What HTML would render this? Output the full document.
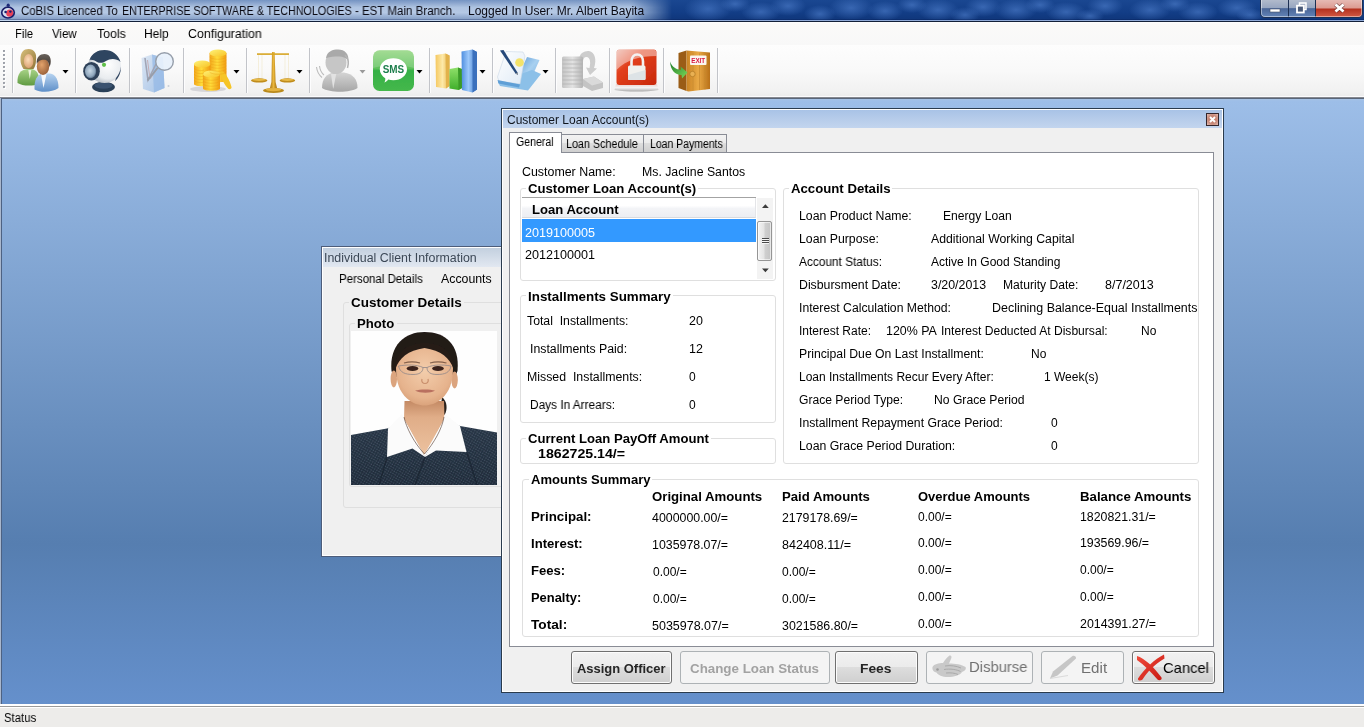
<!DOCTYPE html>
<html lang="en">
<head>
<meta charset="utf-8">
<title>CoBIS - Customer Loan Account(s)</title>
<style>
html,body{margin:0;padding:0;}
body{width:1364px;height:727px;overflow:hidden;position:relative;background:#f0f0f0;font-family:'Liberation Sans',sans-serif;font-size:12px;color:#000;}
div,span.t,svg{position:absolute;box-sizing:border-box;}
span.t{white-space:pre;line-height:16px;height:16px;transform-origin:0 0;will-change:transform;}
.gb{border:1px solid #dfdfdf;border-radius:3px;}
.gbl{background:#fff;}

</style>
</head>
<body>
<header class="titlebar">
<div style="left:0px;top:0px;width:1364px;height:21px;background:linear-gradient(to bottom,#1a4791 0,#123d86 60%,#0f3579 100%);"></div>
<div style="left:0px;top:0px;width:1364px;height:21px;background:radial-gradient(ellipse 24px 13px at 708px 9px,rgba(80,128,205,.6) 0,rgba(80,128,205,0) 100%),radial-gradient(ellipse 15px 8px at 735px 4px,rgba(80,128,205,.6) 0,rgba(80,128,205,0) 100%),radial-gradient(ellipse 20px 10px at 761px 12px,rgba(80,128,205,.6) 0,rgba(80,128,205,0) 100%),radial-gradient(ellipse 18px 10px at 788px 6px,rgba(80,128,205,.6) 0,rgba(80,128,205,0) 100%),radial-gradient(ellipse 16px 9px at 820px 14px,rgba(80,128,205,.6) 0,rgba(80,128,205,0) 100%),radial-gradient(ellipse 22px 12px at 851px 8px,rgba(80,128,205,.6) 0,rgba(80,128,205,0) 100%),radial-gradient(ellipse 18px 10px at 885px 11px,rgba(80,128,205,.6) 0,rgba(80,128,205,0) 100%),radial-gradient(ellipse 15px 8px at 912px 5px,rgba(80,128,205,.6) 0,rgba(80,128,205,0) 100%),radial-gradient(ellipse 21px 11px at 938px 10px,rgba(80,128,205,.6) 0,rgba(80,128,205,0) 100%),radial-gradient(ellipse 15px 8px at 965px 15px,rgba(80,128,205,.6) 0,rgba(80,128,205,0) 100%),radial-gradient(ellipse 18px 10px at 983px 7px,rgba(80,128,205,.6) 0,rgba(80,128,205,0) 100%),radial-gradient(ellipse 21px 11px at 1016px 10px,rgba(80,128,205,.6) 0,rgba(80,128,205,0) 100%),radial-gradient(ellipse 15px 8px at 1040px 5px,rgba(80,128,205,.6) 0,rgba(80,128,205,0) 100%),radial-gradient(ellipse 20px 10px at 1066px 12px,rgba(80,128,205,.6) 0,rgba(80,128,205,0) 100%),radial-gradient(ellipse 14px 7px at 1090px 16px,rgba(80,128,205,.6) 0,rgba(80,128,205,0) 100%),radial-gradient(ellipse 18px 10px at 1105px 6px,rgba(80,128,205,.6) 0,rgba(80,128,205,0) 100%),radial-gradient(ellipse 21px 11px at 1150px 10px,rgba(80,128,205,.6) 0,rgba(80,128,205,0) 100%),radial-gradient(ellipse 15px 8px at 1175px 4px,rgba(80,128,205,.6) 0,rgba(80,128,205,0) 100%),radial-gradient(ellipse 20px 10px at 1198px 12px,rgba(80,128,205,.6) 0,rgba(80,128,205,0) 100%),radial-gradient(ellipse 20px 10px at 1237px 8px,rgba(80,128,205,.6) 0,rgba(80,128,205,0) 100%),radial-gradient(ellipse 14px 7px at 1250px 15px,rgba(80,128,205,.6) 0,rgba(80,128,205,0) 100%);"></div>
<div style="left:0px;top:0px;width:680px;height:21px;background:linear-gradient(to bottom,rgba(208,224,244,.5) 0,rgba(208,224,244,.82) 35%,rgba(208,224,244,.86) 60%,rgba(208,224,244,.55) 100%);-webkit-mask-image:linear-gradient(to right,#000 0,#000 630px,rgba(0,0,0,.5) 652px,transparent 672px);mask-image:linear-gradient(to right,#000 0,#000 630px,rgba(0,0,0,.5) 652px,transparent 672px);"></div>
<div style="left:0px;top:19px;width:1364px;height:1px;background:rgba(0,20,70,.25);"></div>
<div style="left:0px;top:20px;width:1364px;height:1px;background:linear-gradient(to right,#c4d6ee 0,#c4d6ee 620px,#90aad8 680px,#90aad8 100%);"></div>
<div style="left:0px;top:21px;width:1364px;height:1px;background:#14213a;"></div>
<span class="t" style="left:20.7px;top:2.8px;font-size:12px;transform:scaleX(0.9485);color:#0a0a14;">CoBIS Licenced To</span>
<span class="t" style="left:121.6px;top:2.8px;font-size:12px;transform:scaleX(0.8929);color:#0a0a14;">ENTERPRISE SOFTWARE &amp; TECHNOLOGIES</span>
<span class="t" style="left:354.5px;top:2.8px;font-size:12px;transform:scaleX(0.9600);color:#0a0a14;">- EST Main Branch.</span>
<span class="t" style="left:467.8px;top:2.8px;font-size:12px;color:#0a0a14;">Logged In User: Mr. Albert Bayita</span>
<svg style="left:0;top:3px" width="17" height="17" viewBox="0 0 17 17"><circle cx="8.2" cy="2.2" r="1.6" fill="#1c2a78"/><ellipse cx="8" cy="9.6" rx="6.6" ry="5.6" fill="#d7dff0"/><ellipse cx="9.8" cy="10.2" rx="3.6" ry="3.6" fill="#e8435a"/><ellipse cx="8" cy="9.6" rx="6.3" ry="5.4" fill="none" stroke="#1a1f6a" stroke-width="1.7"/><circle cx="5.6" cy="9" r="1.3" fill="#1a1f6a"/><circle cx="10.4" cy="8.6" r="1.2" fill="#1a1f6a"/></svg>
<svg style="left:1258px;top:0" width="106" height="20" viewBox="1258 0 106 20"><defs><linearGradient id="wbB" x1="0" y1="0" x2="0" y2="1"><stop offset="0" stop-color="#b4bdcd"/><stop offset=".48" stop-color="#97a6c0"/><stop offset=".52" stop-color="#4a6698"/><stop offset="1" stop-color="#6485b8"/></linearGradient><linearGradient id="wbR" x1="0" y1="0" x2="0" y2="1"><stop offset="0" stop-color="#e6bab4"/><stop offset=".48" stop-color="#dc9a90"/><stop offset=".52" stop-color="#b4301e"/><stop offset="1" stop-color="#d25a44"/></linearGradient></defs><path d="M1260.5 -1 H1362.5 V13 C1362.5 16 1361 17.5 1358 17.5 H1265 C1262 17.5 1260.5 16 1260.5 13Z" fill="url(#wbB)" stroke="#1c2f52" stroke-width="1"/><path d="M1315.5 0 H1362 V13 C1362 15.5 1360.5 17 1358 17 H1315.5Z" fill="url(#wbR)"/><path d="M1288.5 0 V17.5 M1315.5 0 V17.5" stroke="#1c2f52" stroke-width="1"/><path d="M1261.5 0 V13 C1261.5 15.5 1263 16.5 1265 16.5 H1358 C1360 16.5 1361.500 15.5 1361.5 13 V0" fill="none" stroke="#fff" stroke-opacity=".45" stroke-width="1"/><rect x="1270" y="9" width="10" height="3" fill="#fff" stroke="#44506a" stroke-width=".6"/><rect x="1299.500" y="3" width="6.500" height="6.5" fill="none" stroke="#fff" stroke-width="1.5"/><rect x="1297" y="5.700" width="6.800" height="6.800" fill="#4a5a78" stroke="#fff" stroke-width="1.8"/><path d="M1335.500 4.500 L1343.500 11.500 M1343.500 4.500 L1335.500 11.500" stroke="#5a3030" stroke-opacity=".7" stroke-width="4.2"/><path d="M1335.500 4.500 L1343.500 11.500 M1343.500 4.500 L1335.500 11.500" stroke="#fff" stroke-width="2.800"/></svg>
</header>
<nav class="menubar">
<div style="left:0px;top:22px;width:1364px;height:23px;background:linear-gradient(to bottom,#ffffff 0,#fbfaf9 8%,#f8f8f8 100%);"></div>
<span class="t" style="left:15.2px;top:25.7px;font-size:12.5px;transform:scaleX(0.8930);">File</span>
<span class="t" style="left:51.5px;top:25.7px;font-size:12.5px;transform:scaleX(0.9191);">View</span>
<span class="t" style="left:96.5px;top:25.7px;font-size:12.5px;transform:scaleX(0.9833);">Tools</span>
<span class="t" style="left:144.0px;top:25.7px;font-size:12.5px;transform:scaleX(0.9604);">Help</span>
<span class="t" style="left:188.0px;top:25.7px;font-size:12.5px;transform:scaleX(0.9911);">Configuration</span>
</nav>
<section class="toolbar">
<div style="left:0px;top:45px;width:1364px;height:52px;background:linear-gradient(to bottom,#fdfdfd 0,#f9f9f9 50%,#f1f1f1 90%,#ebebeb 100%);"></div>
<div style="left:0px;top:96px;width:1364px;height:1px;background:#fbfbfd;"></div>
<div style="left:0px;top:97px;width:1364px;height:1px;background:#85888f;"></div>
<div style="left:0px;top:98px;width:1364px;height:1px;background:#596578;"></div>
<svg style="left:0;top:45px" width="730" height="52" viewBox="0 45 730 52">
<defs>
<linearGradient id="gGreenBody" x1="0" y1="0" x2="0" y2="1"><stop offset="0" stop-color="#a9d488"/><stop offset="1" stop-color="#5f9a41"/></linearGradient>
<linearGradient id="gBlueBody" x1="0" y1="0" x2="0" y2="1"><stop offset="0" stop-color="#b7d3f0"/><stop offset="1" stop-color="#5e8fc8"/></linearGradient>
<radialGradient id="gSkinW" cx=".45" cy=".4" r=".7"><stop offset="0" stop-color="#fbdcb8"/><stop offset="1" stop-color="#d79a6a"/></radialGradient>
<radialGradient id="gSkinM" cx=".4" cy=".4" r=".75"><stop offset="0" stop-color="#e3a36c"/><stop offset="1" stop-color="#8c5530"/></radialGradient>
<linearGradient id="gHairW" x1="0" y1="0" x2="1" y2="1"><stop offset="0" stop-color="#d9c07c"/><stop offset="1" stop-color="#8f7438"/></linearGradient>
<linearGradient id="gHairM" x1="0" y1="0" x2="0" y2="1"><stop offset="0" stop-color="#6a625c"/><stop offset="1" stop-color="#3a322c"/></linearGradient>
<radialGradient id="gCamBody" cx=".6" cy=".45" r=".7"><stop offset="0" stop-color="#ffffff"/><stop offset=".6" stop-color="#e9ecef"/><stop offset="1" stop-color="#9aa3ad"/></radialGradient>
<radialGradient id="gLens" cx=".45" cy=".45" r=".6"><stop offset="0" stop-color="#c8d8e6"/><stop offset=".7" stop-color="#8fa6bc"/><stop offset="1" stop-color="#4a607a"/></radialGradient>
<linearGradient id="gGold" x1="0" y1="0" x2="1" y2="0"><stop offset="0" stop-color="#f2a51c"/><stop offset=".45" stop-color="#ffdc3a"/><stop offset="1" stop-color="#f09a12"/></linearGradient>
<linearGradient id="gGoldTop" x1="0" y1="0" x2="1" y2="1"><stop offset="0" stop-color="#fff27a"/><stop offset="1" stop-color="#f7c322"/></linearGradient>
<linearGradient id="gBrass" x1="0" y1="0" x2="1" y2="0"><stop offset="0" stop-color="#a87516"/><stop offset=".5" stop-color="#e9b63a"/><stop offset="1" stop-color="#a06c10"/></linearGradient>
<linearGradient id="gSms" x1="0" y1="0" x2="0" y2="1"><stop offset="0" stop-color="#8fd47c"/><stop offset=".45" stop-color="#5cc05a"/><stop offset=".5" stop-color="#35b045"/><stop offset="1" stop-color="#45b84c"/></linearGradient>
<linearGradient id="gBarY" x1="0" y1="0" x2="1" y2="0"><stop offset="0" stop-color="#f5c860"/><stop offset=".5" stop-color="#fde9a8"/><stop offset="1" stop-color="#e9b850"/></linearGradient>
<linearGradient id="gBarG" x1="0" y1="0" x2="0" y2="1"><stop offset="0" stop-color="#8fe06a"/><stop offset="1" stop-color="#3fae2a"/></linearGradient>
<linearGradient id="gBarB" x1="0" y1="0" x2="1" y2="0"><stop offset="0" stop-color="#4f8fe0"/><stop offset=".45" stop-color="#9cc8fa"/><stop offset="1" stop-color="#3d78c8"/></linearGradient>
<linearGradient id="gRed" x1="0" y1="0" x2="1" y2="1"><stop offset="0" stop-color="#e8a090"/><stop offset=".35" stop-color="#e2401c"/><stop offset="1" stop-color="#c8280c"/></linearGradient>
<linearGradient id="gRefl" x1="0" y1="0" x2="0" y2="1"><stop offset="0" stop-color="#e8d0cc"/><stop offset=".5" stop-color="#f4f4f4"/><stop offset="1" stop-color="#a8a8a8"/></linearGradient>
<linearGradient id="gDoor" x1="0" y1="0" x2="1" y2="0"><stop offset="0" stop-color="#c98324"/><stop offset=".5" stop-color="#e9a946"/><stop offset="1" stop-color="#b87018"/></linearGradient>
<linearGradient id="gArrow" x1="0" y1="0" x2="1" y2="1"><stop offset="0" stop-color="#1d7a2a"/><stop offset="1" stop-color="#7ddc5a"/></linearGradient>
<linearGradient id="gPaper" x1="0" y1="0" x2="1" y2="1"><stop offset="0" stop-color="#ffffff"/><stop offset="1" stop-color="#dfeaf6"/></linearGradient>
<linearGradient id="gFolder" x1="0" y1="0" x2="1" y2="1"><stop offset="0" stop-color="#4f8fd0"/><stop offset=".5" stop-color="#a8d0f0"/><stop offset="1" stop-color="#6fa8dc"/></linearGradient>
<linearGradient id="gGray" x1="0" y1="0" x2="0" y2="1"><stop offset="0" stop-color="#d4d4d4"/><stop offset="1" stop-color="#a6a6a6"/></linearGradient>
<linearGradient id="gGray2" x1="0" y1="0" x2="1" y2="0"><stop offset="0" stop-color="#c4c4c4"/><stop offset=".5" stop-color="#e2e2e2"/><stop offset="1" stop-color="#b4b4b4"/></linearGradient>
<linearGradient id="gDoc" x1="0" y1="0" x2="1" y2="1"><stop offset="0" stop-color="#dbe6f4"/><stop offset="1" stop-color="#9fbfe6"/></linearGradient>
<filter id="soft" x="-10%" y="-10%" width="120%" height="120%"><feGaussianBlur stdDeviation="0.45"/></filter>
<filter id="soft2" x="-20%" y="-20%" width="140%" height="140%"><feGaussianBlur stdDeviation="0.9"/></filter>
</defs>
<rect x="3" y="50" width="2" height="2" fill="#9da1a8"/><rect x="4" y="51" width="2" height="2" fill="#fff" opacity=".9"/><rect x="3" y="50" width="2" height="2" fill="#9da1a8" opacity=".9"/>
<rect x="3" y="54" width="2" height="2" fill="#9da1a8"/><rect x="4" y="55" width="2" height="2" fill="#fff" opacity=".9"/><rect x="3" y="54" width="2" height="2" fill="#9da1a8" opacity=".9"/>
<rect x="3" y="58" width="2" height="2" fill="#9da1a8"/><rect x="4" y="59" width="2" height="2" fill="#fff" opacity=".9"/><rect x="3" y="58" width="2" height="2" fill="#9da1a8" opacity=".9"/>
<rect x="3" y="62" width="2" height="2" fill="#9da1a8"/><rect x="4" y="63" width="2" height="2" fill="#fff" opacity=".9"/><rect x="3" y="62" width="2" height="2" fill="#9da1a8" opacity=".9"/>
<rect x="3" y="66" width="2" height="2" fill="#9da1a8"/><rect x="4" y="67" width="2" height="2" fill="#fff" opacity=".9"/><rect x="3" y="66" width="2" height="2" fill="#9da1a8" opacity=".9"/>
<rect x="3" y="70" width="2" height="2" fill="#9da1a8"/><rect x="4" y="71" width="2" height="2" fill="#fff" opacity=".9"/><rect x="3" y="70" width="2" height="2" fill="#9da1a8" opacity=".9"/>
<rect x="3" y="74" width="2" height="2" fill="#9da1a8"/><rect x="4" y="75" width="2" height="2" fill="#fff" opacity=".9"/><rect x="3" y="74" width="2" height="2" fill="#9da1a8" opacity=".9"/>
<rect x="3" y="78" width="2" height="2" fill="#9da1a8"/><rect x="4" y="79" width="2" height="2" fill="#fff" opacity=".9"/><rect x="3" y="78" width="2" height="2" fill="#9da1a8" opacity=".9"/>
<rect x="3" y="82" width="2" height="2" fill="#9da1a8"/><rect x="4" y="83" width="2" height="2" fill="#fff" opacity=".9"/><rect x="3" y="82" width="2" height="2" fill="#9da1a8" opacity=".9"/>
<rect x="3" y="86" width="2" height="2" fill="#9da1a8"/><rect x="4" y="87" width="2" height="2" fill="#fff" opacity=".9"/><rect x="3" y="86" width="2" height="2" fill="#9da1a8" opacity=".9"/>
<path d="M12.5 48V93" stroke="#c2c4c9" stroke-width="1"/><path d="M13.5 48V93" stroke="#fdfdfe" stroke-width="1"/>
<path d="M75.5 48V93" stroke="#c2c4c9" stroke-width="1"/><path d="M76.5 48V93" stroke="#fdfdfe" stroke-width="1"/>
<path d="M129.5 48V93" stroke="#c2c4c9" stroke-width="1"/><path d="M130.5 48V93" stroke="#fdfdfe" stroke-width="1"/>
<path d="M183.5 48V93" stroke="#c2c4c9" stroke-width="1"/><path d="M184.5 48V93" stroke="#fdfdfe" stroke-width="1"/>
<path d="M246.5 48V93" stroke="#c2c4c9" stroke-width="1"/><path d="M247.5 48V93" stroke="#fdfdfe" stroke-width="1"/>
<path d="M309.5 48V93" stroke="#c2c4c9" stroke-width="1"/><path d="M310.5 48V93" stroke="#fdfdfe" stroke-width="1"/>
<path d="M429.5 48V93" stroke="#c2c4c9" stroke-width="1"/><path d="M430.5 48V93" stroke="#fdfdfe" stroke-width="1"/>
<path d="M492.5 48V93" stroke="#c2c4c9" stroke-width="1"/><path d="M493.5 48V93" stroke="#fdfdfe" stroke-width="1"/>
<path d="M555.5 48V93" stroke="#c2c4c9" stroke-width="1"/><path d="M556.5 48V93" stroke="#fdfdfe" stroke-width="1"/>
<path d="M609.5 48V93" stroke="#c2c4c9" stroke-width="1"/><path d="M610.5 48V93" stroke="#fdfdfe" stroke-width="1"/>
<path d="M663.5 48V93" stroke="#c2c4c9" stroke-width="1"/><path d="M664.5 48V93" stroke="#fdfdfe" stroke-width="1"/>
<path d="M717.5 48V93" stroke="#c2c4c9" stroke-width="1"/><path d="M718.5 48V93" stroke="#fdfdfe" stroke-width="1"/>
<path d="M62.5 70 h6 l-3 3.5z" fill="#000"/>
<path d="M233.5 70 h6 l-3 3.5z" fill="#000"/>
<path d="M296.5 70 h6 l-3 3.5z" fill="#000"/>
<path d="M359.5 70 h6 l-3 3.5z" fill="#9a9a9a"/>
<path d="M416.5 70 h6 l-3 3.5z" fill="#000"/>
<path d="M479.5 70 h6 l-3 3.5z" fill="#000"/>
<path d="M542.5 70 h6 l-3 3.5z" fill="#000"/>
<g filter="url(#soft)">
<path d="M17.5 83 C17 74 21 69.5 27 69 L31 69 C36 69.5 38.5 73 39 78 L39 84 C32 86.5 22 86 17.5 83Z" fill="url(#gGreenBody)"/>
<path d="M28.3 70 l1.5 9 l1.5 -9z" fill="#e9f3dc"/>
<path d="M20.5 60 C20 52 24 49 28.5 49 C34 49 37 53 36 60 C36 64 35 67 33.5 69 L23.5 69 C21.5 66 20.5 63 20.5 60Z" fill="url(#gHairW)"/>
<ellipse cx="28.6" cy="61" rx="4.8" ry="7" fill="url(#gSkinW)"/>
<path d="M34.5 89.5 C34 80 37 74.5 43 73.5 L50 73.5 C56 74.5 58.5 80 58.5 88 C52 92.5 41 93 34.5 89.5Z" fill="url(#gBlueBody)"/>
<path d="M41 74 l2.5 14 l3 -14z" fill="#f4f8fc"/>
<ellipse cx="43" cy="66.5" rx="6.2" ry="8.4" fill="url(#gSkinM)"/>
<path d="M36.8 64 C36 57 40 54 44.5 54 C49.5 54 51.5 58 50.5 64 L49.5 67 C49 63 48 61 46 60 C43 59.5 40 60 38.5 61.5 C37.5 62.5 37.2 63 36.8 64Z" fill="url(#gHairM)"/>
</g>
<g filter="url(#soft)">
<ellipse cx="103.5" cy="87" rx="11.5" ry="5.2" fill="#2c4058"/>
<ellipse cx="103.5" cy="85.5" rx="9" ry="3.2" fill="#3a536f"/>
<circle cx="104.5" cy="66.5" r="16.5" fill="url(#gCamBody)"/>
<path d="M89.5 60 C92 53 98 50 104.5 50 C112 50 118.5 54.5 120.5 62 C116 58 110 58.5 106 61 C103 63 100 63.5 97 62 C94.5 60.5 92 59.5 89.5 60Z" fill="#2f4560"/>
<path d="M116 78 C118.5 75 120.5 71 121 66.5 C121 72 119 78 115 81Z" fill="#2f4560"/>
<ellipse cx="91.5" cy="71.2" rx="8.3" ry="9.3" fill="#2d4058"/>
<ellipse cx="90.6" cy="71.4" rx="5.6" ry="6.8" fill="url(#gLens)"/>
<circle cx="104" cy="64.8" r="2.1" fill="#5fc04a"/>
</g>
<g filter="url(#soft)" opacity=".92">
<path d="M141.500 58 L152 54.500 L163 57.500 L164.500 88 L154 92.500 L143 89Z" fill="url(#gDoc)"/>
<path d="M152 54.500 L163 57.500 L164.500 88 L154 92.500Z" fill="#8db4e4" opacity=".75"/>
<path d="M145 58 L148 80 L156 64" fill="none" stroke="#9a9eb0" stroke-width="1.6"/>
<path d="M147.500 60 L150 79 L158 68" fill="none" stroke="#c0a8b0" stroke-width="1"/>
<circle cx="164.500" cy="61.500" r="8.800" fill="#e6f0fb" fill-opacity=".93" stroke="#8e97a4" stroke-width="1.4"/>
<path d="M157.500 68 L147.500 80.500" stroke="#8e97a4" stroke-width="2"/>
<circle cx="168.500" cy="86" r="1" fill="#c6ccd6"/>
</g>
<g filter="url(#soft)">
<ellipse cx="208" cy="89" rx="18" ry="3" fill="#c9c9cf" opacity=".7"/>
<path d="M209.5 53 V80 C209.5 83 226.5 83 226.5 80 V53Z" fill="url(#gGold)"/>
<ellipse cx="218" cy="53" rx="8.5" ry="3.6" fill="url(#gGoldTop)"/>
<path d="M194 64 V84 C194 87 210.5 87 210.5 84 V64Z" fill="url(#gGold)"/>
<ellipse cx="202.2" cy="64" rx="8.3" ry="3.6" fill="url(#gGoldTop)"/>
<path d="M203 74 V88.5 C203 91.5 220 91.5 220 88.5 V74Z" fill="url(#gGold)"/>
<ellipse cx="211.5" cy="74" rx="8.5" ry="3.6" fill="url(#gGoldTop)"/>
<path d="M221 71 C224 70 230 80 231.5 87 C232 89 229 90 228 88.5 C224 84 221 78 220.5 73Z" fill="#f6c526"/>
<path d="M209.5 57 C212 60 224 60 226.5 57" fill="none" stroke="#e89a10" stroke-width=".5" opacity=".7"/>
<path d="M209.5 60 C212 63 224 63 226.5 60" fill="none" stroke="#e89a10" stroke-width=".5" opacity=".7"/>
<path d="M209.5 63 C212 66 224 66 226.5 63" fill="none" stroke="#e89a10" stroke-width=".5" opacity=".7"/>
<path d="M209.5 66 C212 69 224 69 226.5 66" fill="none" stroke="#e89a10" stroke-width=".5" opacity=".7"/>
<path d="M209.5 69 C212 72 224 72 226.5 69" fill="none" stroke="#e89a10" stroke-width=".5" opacity=".7"/>
<path d="M209.5 72 C212 75 224 75 226.5 72" fill="none" stroke="#e89a10" stroke-width=".5" opacity=".7"/>
<path d="M194 68 C196 71 202 71 204 70" fill="none" stroke="#e89a10" stroke-width=".5" opacity=".7"/>
<path d="M194 71 C196 74 202 74 204 73" fill="none" stroke="#e89a10" stroke-width=".5" opacity=".7"/>
<path d="M194 74 C196 77 202 77 204 76" fill="none" stroke="#e89a10" stroke-width=".5" opacity=".7"/>
<path d="M194 77 C196 80 202 80 204 79" fill="none" stroke="#e89a10" stroke-width=".5" opacity=".7"/>
<path d="M194 80 C196 83 202 83 204 82" fill="none" stroke="#e89a10" stroke-width=".5" opacity=".7"/>
<path d="M203 78 C206 81 217 81 220 78" fill="none" stroke="#e89a10" stroke-width=".5" opacity=".7"/>
<path d="M203 81 C206 84 217 84 220 81" fill="none" stroke="#e89a10" stroke-width=".5" opacity=".7"/>
<path d="M203 84 C206 87 217 87 220 84" fill="none" stroke="#e89a10" stroke-width=".5" opacity=".7"/>
<path d="M203 87 C206 90 217 90 220 87" fill="none" stroke="#e89a10" stroke-width=".5" opacity=".7"/>
</g>
<g filter="url(#soft)">
<ellipse cx="273.5" cy="90.5" rx="10.5" ry="2.6" fill="#b98a1e"/>
<ellipse cx="273.5" cy="89.6" rx="8" ry="1.6" fill="#e4b340"/>
<path d="M272 52 h2.6 L275.6 82 L277 88 h-7 L271.4 82Z" fill="url(#gBrass)"/>
<rect x="257" y="53.3" width="32" height="1.6" fill="#d8a624"/>
<path d="M258.5 55 V79 M262 55 V79 M285 55 V79 M288.5 55 V79" stroke="#f0e6c8" stroke-width=".7" opacity=".9"/>
<ellipse cx="259.2" cy="80.4" rx="8.2" ry="2.1" fill="#c08c1a"/>
<ellipse cx="259.2" cy="79.8" rx="6.8" ry="1.1" fill="#e8bb4a"/>
<ellipse cx="287.4" cy="80.4" rx="7.8" ry="2.1" fill="#c08c1a"/>
<ellipse cx="287.4" cy="79.8" rx="6.4" ry="1.1" fill="#e8bb4a"/>
</g>
<g filter="url(#soft)">
<path d="M322 88 C322 78 327 73.5 334 72.5 L344 72.5 C353 74 357.5 79 357.5 88 C350 93 330 93 322 88Z" fill="url(#gGray)"/>
<path d="M331 74 l2.2 15 l3 -15z" fill="#e2e2e2"/>
<ellipse cx="336" cy="62.5" rx="10.5" ry="11.5" fill="#c6c6c6"/>
<path d="M326 58 C327 51 333 49.5 338 49.5 C345 49.5 349 54 348.5 61 C346 57 340 55 326 58Z" fill="#a9a9a9"/>
<path d="M345 55 C348 58 349 63 347.5 68" fill="none" stroke="#b4b4b4" stroke-width="1.5"/>
<path d="M319.5 66 C320 70 321.5 73 324 75 M316.5 67 C317 71.5 319 75 322 77.5" fill="none" stroke="#bdbdbd" stroke-width="1.1"/>
</g>
<g filter="url(#soft)">
<rect x="373" y="50.3" width="41" height="40.6" rx="6.5" fill="url(#gSms)"/>
<path d="M373 57 C373 52 376 50.3 380 50.3 H407 C411 50.3 414 52 414 57 V68 C400 64 387 64 373 68Z" fill="#fff" opacity=".18"/>
<path d="M393.4 58.3 C401 58.3 407 63.2 407 69.3 C407 75.4 401 80.3 393.4 80.3 C391.5 80.3 389.8 80 388.2 79.5 C387.3 81 386 82 384.3 82.4 C385.2 81 385.5 79.6 385.2 78.2 C382 76.2 379.8 73 379.8 69.3 C379.8 63.2 385.8 58.3 393.4 58.3Z" fill="#fff"/>
<text x="393.4" y="72.9" text-anchor="middle" font-family="'Liberation Sans',sans-serif" font-weight="bold" font-size="10" textLength="21.5" lengthAdjust="spacingAndGlyphs" fill="#1f7f4d">SMS</text>
</g>
<g filter="url(#soft)">
<path d="M435.5 55 L445.5 53.5 L449.5 55.5 V86 L446 88.5 L436 87Z" fill="url(#gBarY)"/>
<path d="M445.5 53.5 L449.5 55.5 V86 L446 88.5Z" fill="#e2b24c"/>
<path d="M449.5 69 L458 67.5 L462 69 V88 L458.5 90 L449.5 88.5Z" fill="url(#gBarG)"/>
<path d="M458 67.5 L462 69 V88 L458.5 90Z" fill="#3a9a28"/>
<path d="M461.5 51.5 L472.5 49.5 L477 52 V89.5 L472.5 92.5 L462 90Z" fill="url(#gBarB)"/>
<path d="M472.5 49.5 L477 52 V89.5 L472.5 92.5Z" fill="#3a70bc"/>
</g>
<g filter="url(#soft)">
<path d="M527 57 L539.5 60 L527 88 L514 85Z" fill="url(#gFolder)"/>
<path d="M532 70 L541 74 L528 90.5 L500 86 L498 82Z" fill="#8cc0e8"/>
<path d="M497.5 77 L506 51.5 L523 52 L525 56 L520 84 L499 81Z" fill="url(#gPaper)" stroke="#c9d6e6" stroke-width=".6"/>
<path d="M497.5 80 L520 84.5 L519 87.5 L498.5 83.5Z" fill="#5f9fd6"/>
<circle cx="519.5" cy="62.5" r="4.3" fill="#f4e36a"/>
<path d="M500 50.5 L503.5 50 L517.5 72.5 L518 75 L515.5 73.5Z" fill="#264a7a"/>
<path d="M515.8 73.6 L518 75 L517.5 72.6Z" fill="#9a9a9a"/>
</g>
<g filter="url(#soft)">
<path d="M579 60 C579 53 585 50.5 589 51 C595 52 597 60 594 68 L597 68.5 L590 75 L586 67.5 L589.5 68 C591 62 590 57 586.5 57 C584 57 583 59 583 62Z" fill="#cdcdcd"/>
<rect x="562" y="56.5" width="21" height="31.5" rx="1.5" fill="url(#gGray2)"/>
<path d="M562.5 60 H582.5" stroke="#b0b0b0" stroke-width=".7"/>
<path d="M562.5 64 H582.5" stroke="#b0b0b0" stroke-width=".7"/>
<path d="M562.5 68 H582.5" stroke="#b0b0b0" stroke-width=".7"/>
<path d="M562.5 72 H582.5" stroke="#b0b0b0" stroke-width=".7"/>
<path d="M562.5 76 H582.5" stroke="#b0b0b0" stroke-width=".7"/>
<path d="M562.5 80 H582.5" stroke="#b0b0b0" stroke-width=".7"/>
<path d="M562.5 84 H582.5" stroke="#b0b0b0" stroke-width=".7"/>
<path d="M583 79 L594 76.5 L603 82.5 L603 88 L592 91 L583 86Z" fill="#c4c4c4"/>
<path d="M583 79 L594 76.5 L603 82.5 L592 85.5Z" fill="#dadada"/>
</g>
<g filter="url(#soft)">
<path d="M616 84 L657 84 L658.5 90 C645 92 628 92 614.5 90Z" fill="url(#gRefl)"/>
<rect x="616.5" y="49.5" width="40" height="35.5" rx="3" fill="url(#gRed)"/>
<path d="M616.5 53 C616.5 51 618 49.5 620 49.5 H653 C655 49.5 656.5 51 656.5 53 V56 C640 56 626 60 616.5 70Z" fill="#fff" opacity=".45"/>
<path d="M631.5 66 V61.5 C631.5 57 634 54.5 637.2 54.5 C640.5 54.5 643 57 643 61.5 V66" fill="none" stroke="#f2f2f2" stroke-width="2.6"/>
<rect x="628" y="65.5" width="17.5" height="14.5" rx="1.5" fill="#f1f1ee"/>
<path d="M628 75 L645.5 70 V78.5 C645.5 79.5 645 80 644 80 H629.5 C628.5 80 628 79.5 628 78.5Z" fill="#dde3e6"/>
</g>
<g filter="url(#soft)">
<path d="M678.5 53 L686.5 50.5 V91 L678.5 88Z" fill="#9a5c12"/>
<path d="M686.5 50.5 L710 52.5 V89 L688.5 91.5 L686.5 91Z" fill="url(#gDoor)"/>
<path d="M693 53 V90.5 M699.5 53.5 V90 M705 54 V89.5" stroke="#c4872c" stroke-width=".6"/>
<rect x="690" y="55.5" width="16.5" height="9.5" rx="1" fill="#fbf6f0"/>
<text x="698.2" y="63.4" text-anchor="middle" font-family="'Liberation Sans',sans-serif" font-weight="bold" font-size="8" textLength="14" lengthAdjust="spacingAndGlyphs" fill="#d81840">EXIT</text>
<circle cx="692.5" cy="74" r="2.7" fill="#e9b052" stroke="#a8701c" stroke-width=".6"/>
<path d="M670 61.5 C672 67 676 69.5 681 69.8 L680.5 66.5 L687.5 72.5 L682 78.5 L681.5 75 C675 75 670.5 70 670 61.5Z" fill="url(#gArrow)"/>
</g>
</svg>
</section>
<main class="mdi">
<div style="left:0px;top:99px;width:1364px;height:605px;background:linear-gradient(to bottom,#a6c2e4 0,#9dbee8 2px,#567eb0 73.5%,#6590cc 100%);"></div>
<div style="left:0px;top:98px;width:1px;height:606px;background:#a9b7cd;"></div>
<div style="left:1px;top:98px;width:1px;height:606px;background:#4d6283;"></div>
<div style="left:0px;top:704px;width:1364px;height:2px;background:#fff;"></div>
<section class="window client-info">
<div style="left:321px;top:246px;width:182px;height:311px;background:#f0f0f0;border:1px solid #4d5d7a;box-shadow:inset 0 0 0 1px #fff;"></div>
<div style="left:323px;top:248px;width:180px;height:19px;background:linear-gradient(to bottom,#c3d0df,#e2e8f1);"></div>
<span class="t" style="left:323.5px;top:250.0px;font-size:12px;transform:scaleX(1.0312);color:#3c4856;">Individual Client Information</span>
<span class="t" style="left:338.5px;top:271.0px;font-size:12px;transform:scaleX(0.9579);">Personal Details</span>
<span class="t" style="left:440.5px;top:271.0px;font-size:12px;transform:scaleX(1.0272);">Accounts</span>
<div class="gb" style="left:343px;top:302px;width:170px;height:206px;"></div>
<div style="left:349px;top:296px;width:115px;height:13px;background:#f0f0f0;"></div>
<span class="t" style="left:351.0px;top:294.6px;font-size:12px;transform:scaleX(1.1215);font-weight:bold;">Customer Details</span>
<div class="gb" style="left:349px;top:323px;width:160px;height:164px;"></div>
<div style="left:355px;top:317px;width:42px;height:13px;background:#f0f0f0;"></div>
<span class="t" style="left:357.0px;top:315.6px;font-size:12px;transform:scaleX(1.0941);font-weight:bold;">Photo</span>
<svg style="left:351px;top:331px" width="146" height="154" viewBox="0 0 146 154">
<defs>
<radialGradient id="phSkin" cx=".5" cy=".42" r=".7"><stop offset="0" stop-color="#f3cdab"/><stop offset=".65" stop-color="#e6b38d"/><stop offset="1" stop-color="#cf946c"/></radialGradient>
<linearGradient id="phNeck" x1="0" y1="0" x2="0" y2="1"><stop offset="0" stop-color="#c48a64"/><stop offset=".3" stop-color="#e0ad88"/><stop offset="1" stop-color="#ecc29f"/></linearGradient>
<linearGradient id="phJacket" x1="0" y1="0" x2="0" y2="1"><stop offset="0" stop-color="#283646"/><stop offset="1" stop-color="#1f2b3a"/></linearGradient>
<pattern id="phDots" width="2.6" height="2.6" patternUnits="userSpaceOnUse" patternTransform="rotate(30)"><circle cx="1" cy="1" r=".6" fill="#8a9bb0" opacity=".5"/></pattern>
<filter id="phBlur" x="-5%" y="-5%" width="110%" height="110%"><feGaussianBlur stdDeviation="0.5"/></filter>
<clipPath id="phClip"><rect width="146" height="154"/></clipPath>
</defs>
<rect width="146" height="154" fill="#fefefe"/>
<g clip-path="url(#phClip)"><g filter="url(#phBlur)">
<path d="M91 66 C96 70 97 78 93.500 84 L89 82 Z" fill="#2a211c"/>
<path d="M40.500 40 C38 14 54 1 73.500 1 C94 1 109 13 106.500 40 L104 46 L43 46Z" fill="#211a17"/>
<ellipse cx="42.800" cy="48" rx="3.200" ry="8.500" fill="#dba47e"/>
<ellipse cx="103.600" cy="49" rx="3.200" ry="8.500" fill="#dba47e"/>
<path d="M53.500 70 L53 88 L73 124 L93.500 88 L93 70Z" fill="url(#phNeck)"/>
<path d="M45 37 C44.500 24 56 15 73.500 15 C91 15 102.500 24 102 37 C102 52 98 61 91 67.500 C85 72.500 79 74.500 73.500 74.500 C68 74.500 62 72.500 56 67.500 C49 61 45 52 45 37Z" fill="url(#phSkin)"/>
<path d="M44.500 38 C43.500 22 56 12 73.500 12 C91 12 103.500 22 102.500 38 C99 27 90 19.500 73.500 17 C57 19.500 48 27 44.500 38Z" fill="#261d19"/>
<ellipse cx="61.500" cy="37.500" rx="5.800" ry="2.600" fill="#3a241c"/>
<ellipse cx="87" cy="37.500" rx="5.800" ry="2.600" fill="#3a241c"/>
<path d="M53 32 C58 30.500 64 30.500 69 32 M79 32 C84 30.500 90 30.500 95.500 32" stroke="#6a4a3a" stroke-width="1.200" fill="none" opacity=".8"/>
<path d="M47.500 35 C56 33.500 66 33.500 72 36.500 C72 41.500 68 43.500 62 43.500 C54 43.500 49 41.500 47.500 35Z M76 36.500 C82 33.500 92 33.500 100 35 C99 41.500 94 43.500 86 43.500 C80 43.500 76 41.500 76 36.500Z M72 36.500 L76 36.500" fill="none" stroke="#9a8c8a" stroke-width=".9"/>
<path d="M71 48 C70 51 72 52.500 74 52.500 C76 52.500 78 51 77 48" fill="none" stroke="#c98f6c" stroke-width="1.200"/>
<path d="M64 59.500 C69 58 79 58 84 59.500 C80 62.500 69 62.500 64 59.500Z" fill="#b9705f"/>
<path d="M0 104 L36 97.500 L52 92 L74 126 L95 89 L109 95 L146 101.500 L146 154 L0 154Z" fill="url(#phJacket)"/>
<path d="M0 104 L36 97.500 L52 92 L74 126 L95 89 L109 95 L146 101.500 L146 154 L0 154Z" fill="url(#phDots)"/>
<path d="M74 126 L64 154 M36 126 L28 154 M116 122 L126 154" stroke="#18222e" stroke-width="1.400" fill="none" opacity=".7"/>
<path d="M51 83 L37 97.500 L36 126 L61.500 117.500 L74 126 L54 90Z" fill="#fbfbfb"/>
<path d="M94 83 L109 95 L115.500 121 L85 119.500 L74 126 L92 90Z" fill="#fbfbfb"/>
<path d="M53 86 C55 96 63 112 73.500 123 C83 112 91 98 93 86" fill="none" stroke="#5a4034" stroke-width=".8" opacity=".8"/>
</g></g>
</svg>
</section>
<section class="window loan-accounts">
<div style="left:501px;top:108px;width:723px;height:585px;background:#f0f0f0;border:1px solid #2a3b4d;box-shadow:inset 0 0 0 1px #fff;"></div>
<div style="left:503px;top:110px;width:719px;height:18px;background:linear-gradient(to bottom,#a9c3e6,#c3d5ee);"></div>
<span class="t" style="left:507.0px;top:112.3px;font-size:12px;color:#10151c;">Customer Loan Account(s)</span>
<div style="left:1206px;top:113px;width:13px;height:13px;background:radial-gradient(circle at 50% 50%,#b9705e 0,#c98a7a 55%,#e4beb4 100%);border:1px solid #33262c;"></div>
<svg style="left:1206px;top:113px" width="13" height="13" viewBox="0 0 13 13"><path d="M4 4 L9 9 M9 4 L4 9" stroke="#fff" stroke-width="2"/></svg>
<div style="left:509px;top:152px;width:705px;height:495px;background:#fff;border:1px solid #898c95;"></div>
<div style="left:561px;top:134px;width:83px;height:18px;background:linear-gradient(to bottom,#f2f2f2,#ebebeb 50%,#dddddd 50%,#cfcfcf);border:1px solid #898c95;border-bottom:none;"></div>
<div style="left:643px;top:134px;width:84px;height:18px;background:linear-gradient(to bottom,#f2f2f2,#ebebeb 50%,#dddddd 50%,#cfcfcf);border:1px solid #898c95;border-bottom:none;"></div>
<div style="left:509px;top:132px;width:53px;height:21px;background:#fff;border:1px solid #898c95;border-bottom:none;"></div>
<span class="t" style="left:516.0px;top:134.3px;font-size:12px;transform:scaleX(0.8828);">General</span>
<span class="t" style="left:566.0px;top:136.0px;font-size:12px;transform:scaleX(0.8954);">Loan Schedule</span>
<span class="t" style="left:650.0px;top:136.0px;font-size:12px;transform:scaleX(0.8718);">Loan Payments</span>
<span class="t" style="left:521.5px;top:164.0px;font-size:12px;transform:scaleX(1.0330);">Customer Name:</span>
<span class="t" style="left:642.0px;top:164.0px;font-size:12px;transform:scaleX(1.0246);">Ms. Jacline Santos</span>
<div class="gb" style="left:520px;top:188px;width:256px;height:93px;"></div>
<div style="left:526px;top:182px;width:172px;height:13px;background:#fff;"></div>
<span class="t" style="left:528.0px;top:181.2px;font-size:12px;transform:scaleX(1.0953);font-weight:bold;">Customer Loan Account(s)</span>
<div style="left:522px;top:197px;width:234px;height:1px;background:#a3a3a3;"></div>
<div style="left:522px;top:198px;width:234px;height:20px;background:linear-gradient(to bottom,#ffffff 0,#ffffff 40%,#f3f4f7 55%,#eceef2 100%);border-bottom:1px solid #d8dade;border-right:1px solid #e4e5e8;"></div>
<span class="t" style="left:531.5px;top:201.8px;font-size:12px;transform:scaleX(1.0897);font-weight:bold;">Loan Account</span>
<div style="left:522px;top:219px;width:234px;height:23px;background:#3399ff;"></div>
<span class="t" style="left:524.8px;top:224.8px;font-size:12px;transform:scaleX(1.0502);color:#fff;">2019100005</span>
<span class="t" style="left:524.8px;top:246.8px;font-size:12px;transform:scaleX(1.0502);">2012100001</span>
<div style="left:757px;top:198px;width:16px;height:81px;background:#f3f3f3;"></div>
<div style="left:757px;top:221px;width:15px;height:40px;background:linear-gradient(to right,#f4f4f4 0,#e4e4e4 45%,#cfcfcf 55%,#c4c4c4 100%);border:1px solid #959595;border-radius:2px;box-shadow:inset 0 0 0 1px rgba(255,255,255,.6);"></div>
<svg style="left:757px;top:198px" width="16" height="81" viewBox="0 0 16 81"><path d="M5 10 L8.4 6.3 L11.8 10Z M5 70.5 L8.4 74.2 L11.8 70.500Z" fill="#3b3b3b"/><path d="M5 40.5h7M5 42.5h7M5 44.5h7" stroke="#4a4a4a" stroke-width="1"/><path d="M5 41.5h7M5 43.5h7M5 45.5h7" stroke="#fff" stroke-width="1" opacity=".8"/></svg>
<div class="gb" style="left:520px;top:295px;width:256px;height:128px;"></div>
<div style="left:526px;top:289px;width:147px;height:13px;background:#fff;"></div>
<span class="t" style="left:528.0px;top:288.6px;font-size:12px;transform:scaleX(1.1144);font-weight:bold;">Installments Summary</span>
<span class="t" style="left:527.0px;top:313.0px;font-size:12px;transform:scaleX(1.0214);">Total  Installments:</span>
<span class="t" style="left:688.8px;top:313.0px;font-size:12px;transform:scaleX(1.0405);">20</span>
<span class="t" style="left:529.7px;top:341.0px;font-size:12px;transform:scaleX(1.0251);">Installments Paid:</span>
<span class="t" style="left:688.8px;top:341.0px;font-size:12px;transform:scaleX(1.0405);">12</span>
<span class="t" style="left:527.0px;top:369.0px;font-size:12px;transform:scaleX(1.0281);">Missed  Installments:</span>
<span class="t" style="left:688.8px;top:369.0px;font-size:12px;">0</span>
<span class="t" style="left:529.7px;top:397.0px;font-size:12px;transform:scaleX(0.9880);">Days In Arrears:</span>
<span class="t" style="left:688.8px;top:397.0px;font-size:12px;">0</span>
<div class="gb" style="left:520px;top:438px;width:256px;height:26px;"></div>
<div style="left:526px;top:432px;width:185px;height:13px;background:#fff;"></div>
<span class="t" style="left:528.0px;top:431.0px;font-size:12px;transform:scaleX(1.0926);font-weight:bold;">Current Loan PayOff Amount</span>
<span class="t" style="left:537.5px;top:446.0px;font-size:12px;transform:scaleX(1.1810);font-weight:bold;">1862725.14/=</span>
<div class="gb" style="left:783px;top:188px;width:416px;height:276px;"></div>
<div style="left:789px;top:182px;width:103px;height:13px;background:#fff;"></div>
<span class="t" style="left:791.0px;top:180.7px;font-size:12px;transform:scaleX(1.0983);font-weight:bold;">Account Details</span>
<span class="t" style="left:798.8px;top:208.2px;font-size:12px;transform:scaleX(1.0240);">Loan Product Name:</span>
<span class="t" style="left:943.0px;top:208.2px;font-size:12px;transform:scaleX(1.0094);">Energy Loan</span>
<span class="t" style="left:798.8px;top:231.0px;font-size:12px;transform:scaleX(1.0235);">Loan Purpose:</span>
<span class="t" style="left:930.8px;top:231.0px;font-size:12px;transform:scaleX(1.0204);">Additional Working Capital</span>
<span class="t" style="left:798.8px;top:254.2px;font-size:12px;transform:scaleX(0.9875);">Account Status:</span>
<span class="t" style="left:930.8px;top:254.2px;font-size:12px;">Active In Good Standing</span>
<span class="t" style="left:798.8px;top:277.0px;font-size:12px;transform:scaleX(1.0254);">Disbursment Date:</span>
<span class="t" style="left:930.8px;top:277.0px;font-size:12px;transform:scaleX(1.0320);">3/20/2013</span>
<span class="t" style="left:1002.8px;top:277.0px;font-size:12px;transform:scaleX(1.0093);">Maturity Date:</span>
<span class="t" style="left:1104.5px;top:277.0px;font-size:12px;transform:scaleX(1.0424);">8/7/2013</span>
<span class="t" style="left:798.8px;top:300.0px;font-size:12px;transform:scaleX(1.0166);">Interest Calculation Method:</span>
<span class="t" style="left:991.8px;top:300.0px;font-size:12px;transform:scaleX(1.0368);">Declining Balance-Equal Installments</span>
<span class="t" style="left:798.8px;top:323.0px;font-size:12px;">Interest Rate:</span>
<span class="t" style="left:885.8px;top:323.0px;font-size:12px;transform:scaleX(1.0355);">120% PA</span>
<span class="t" style="left:940.8px;top:323.0px;font-size:12px;transform:scaleX(1.0077);">Interest Deducted At Disbursal:</span>
<span class="t" style="left:1140.5px;top:323.0px;font-size:12px;">No</span>
<span class="t" style="left:798.8px;top:346.0px;font-size:12px;transform:scaleX(1.0186);">Principal Due On Last Installment:</span>
<span class="t" style="left:1031.0px;top:346.0px;font-size:12px;transform:scaleX(0.9906);">No</span>
<span class="t" style="left:798.8px;top:369.0px;font-size:12px;">Loan Installments Recur Every After:</span>
<span class="t" style="left:1043.5px;top:369.0px;font-size:12px;">1 Week(s)</span>
<span class="t" style="left:798.8px;top:392.0px;font-size:12px;transform:scaleX(1.0100);">Grace Period Type:</span>
<span class="t" style="left:934.2px;top:392.0px;font-size:12px;transform:scaleX(1.0126);">No Grace Period</span>
<span class="t" style="left:798.8px;top:415.0px;font-size:12px;transform:scaleX(1.0190);">Installment Repayment Grace Period:</span>
<span class="t" style="left:1050.8px;top:415.0px;font-size:12px;">0</span>
<span class="t" style="left:798.8px;top:438.0px;font-size:12px;transform:scaleX(1.0231);">Loan Grace Period Duration:</span>
<span class="t" style="left:1050.8px;top:438.0px;font-size:12px;">0</span>
<div class="gb" style="left:522px;top:479px;width:677px;height:158px;"></div>
<div style="left:529px;top:473px;width:123px;height:13px;background:#fff;"></div>
<span class="t" style="left:531.0px;top:472.2px;font-size:12px;transform:scaleX(1.0861);font-weight:bold;">Amounts Summary</span>
<span class="t" style="left:652.0px;top:489.0px;font-size:12px;transform:scaleX(1.0994);font-weight:bold;">Original Amounts</span>
<span class="t" style="left:782.1px;top:489.0px;font-size:12px;transform:scaleX(1.0955);font-weight:bold;">Paid Amounts</span>
<span class="t" style="left:918.1px;top:489.0px;font-size:12px;transform:scaleX(1.0823);font-weight:bold;">Overdue Amounts</span>
<span class="t" style="left:1080.1px;top:489.0px;font-size:12px;transform:scaleX(1.1038);font-weight:bold;">Balance Amounts</span>
<span class="t" style="left:531.0px;top:508.7px;font-size:12px;transform:scaleX(1.1063);font-weight:bold;">Principal:</span>
<span class="t" style="left:531.0px;top:536.2px;font-size:12px;transform:scaleX(1.0920);font-weight:bold;">Interest:</span>
<span class="t" style="left:531.0px;top:563.0px;font-size:12px;transform:scaleX(1.0906);font-weight:bold;">Fees:</span>
<span class="t" style="left:531.0px;top:590.0px;font-size:12px;transform:scaleX(1.0752);font-weight:bold;">Penalty:</span>
<span class="t" style="left:531.0px;top:617.0px;font-size:12px;transform:scaleX(1.1390);font-weight:bold;">Total:</span>
<span class="t" style="left:652.0px;top:509.8px;font-size:12px;transform:scaleX(1.0305);">4000000.00/=</span>
<span class="t" style="left:782.1px;top:509.8px;font-size:12px;transform:scaleX(1.0278);">2179178.69/=</span>
<span class="t" style="left:918.1px;top:508.6px;font-size:12px;">0.00/=</span>
<span class="t" style="left:1080.1px;top:508.6px;font-size:12px;transform:scaleX(1.0278);">1820821.31/=</span>
<span class="t" style="left:652.0px;top:537.0px;font-size:12px;transform:scaleX(1.0305);">1035978.07/=</span>
<span class="t" style="left:782.1px;top:537.0px;font-size:12px;transform:scaleX(1.0440);">842408.11/=</span>
<span class="t" style="left:918.1px;top:535.3px;font-size:12px;">0.00/=</span>
<span class="t" style="left:1080.1px;top:535.3px;font-size:12px;transform:scaleX(1.0301);">193569.96/=</span>
<span class="t" style="left:652.5px;top:564.0px;font-size:12px;">0.00/=</span>
<span class="t" style="left:782.1px;top:564.0px;font-size:12px;">0.00/=</span>
<span class="t" style="left:918.1px;top:562.4px;font-size:12px;">0.00/=</span>
<span class="t" style="left:1080.1px;top:562.4px;font-size:12px;">0.00/=</span>
<span class="t" style="left:652.5px;top:590.7px;font-size:12px;">0.00/=</span>
<span class="t" style="left:782.1px;top:590.7px;font-size:12px;">0.00/=</span>
<span class="t" style="left:918.1px;top:589.0px;font-size:12px;">0.00/=</span>
<span class="t" style="left:1080.1px;top:589.0px;font-size:12px;">0.00/=</span>
<span class="t" style="left:652.0px;top:617.5px;font-size:12px;transform:scaleX(1.0400);">5035978.07/=</span>
<span class="t" style="left:782.1px;top:617.5px;font-size:12px;transform:scaleX(1.0319);">3021586.80/=</span>
<span class="t" style="left:918.1px;top:616.0px;font-size:12px;">0.00/=</span>
<span class="t" style="left:1080.1px;top:616.0px;font-size:12px;transform:scaleX(1.0319);">2014391.27/=</span>
<div style="left:571px;top:651px;width:101px;height:33px;background:linear-gradient(to bottom,#f2f2f2 0,#ebebeb 48%,#dddddd 50%,#cfcfcf 100%);border:1px solid #707070;border-radius:3px;box-shadow:inset 0 0 0 1px #fcfcfc;"></div>
<span class="t" style="left:576.9px;top:661.2px;font-size:12px;transform:scaleX(1.0789);font-weight:bold;color:#262626;">Assign Officer</span>
<div style="left:680px;top:651px;width:150px;height:33px;background:#f4f4f4;border:1px solid #adb2b5;border-radius:3px;"></div>
<span class="t" style="left:690.4px;top:661.2px;font-size:12px;transform:scaleX(1.1119);font-weight:bold;color:#a2a2a2;">Change Loan Status</span>
<div style="left:835px;top:651px;width:83px;height:33px;background:linear-gradient(to bottom,#f2f2f2 0,#ebebeb 48%,#dddddd 50%,#cfcfcf 100%);border:1px solid #707070;border-radius:3px;box-shadow:inset 0 0 0 1px #fcfcfc;"></div>
<span class="t" style="left:860.3px;top:661.2px;font-size:12px;transform:scaleX(1.1477);font-weight:bold;color:#262626;">Fees</span>
<div style="left:926px;top:651px;width:107px;height:33px;background:#f4f4f4;border:1px solid #adb2b5;border-radius:3px;"></div>
<span class="t" style="left:969.3px;top:659.4px;font-size:15px;transform:scaleX(0.9884);color:#707070;">Disburse</span>
<div style="left:1041px;top:651px;width:83px;height:33px;background:#f4f4f4;border:1px solid #adb2b5;border-radius:3px;"></div>
<span class="t" style="left:1081.0px;top:660.2px;font-size:15px;transform:scaleX(1.0093);color:#707070;">Edit</span>
<div style="left:1132px;top:651px;width:83px;height:33px;background:linear-gradient(to bottom,#f2f2f2 0,#ebebeb 48%,#dddddd 50%,#cfcfcf 100%);border:1px solid #707070;border-radius:3px;box-shadow:inset 0 0 0 1px #fcfcfc;"></div>
<span class="t" style="left:1163.2px;top:660.2px;font-size:15px;transform:scaleX(0.9849);">Cancel</span>
<svg style="left:926px;top:651px" width="290" height="33" viewBox="926 651 290 33">
<defs><filter id="bsoft" x="-10%" y="-10%" width="120%" height="120%"><feGaussianBlur stdDeviation="0.5"/></filter>
<linearGradient id="bx" x1="0" y1="0" x2="1" y2="1"><stop offset="0" stop-color="#f04a3a"/><stop offset="1" stop-color="#c81a14"/></linearGradient></defs>
<g filter="url(#bsoft)">
<path d="M932.5 667 C934 664 939 663 943 663 C945 660 947 657 949.5 655.5 C951.5 655 952 657 951 659 L949 663.5 C955 663.5 962 664.5 965.5 667 C966.500 669 965 671 962 672 C960 675.500 954 677 948 677 C942 677 938 675 936.500 672.500 C933.500 672 932 669.500 932.500 667Z" fill="#c9c9c9"/>
<path d="M945 666 C950 665 957 666 961 668 M944 669.500 C950 668.500 957 669.500 960.500 671.500 M946 673 C950 672.500 955 673 958 674.500" stroke="#a9a9a9" stroke-width="1" fill="none"/>
<circle cx="937.500" cy="669.500" r="1.300" fill="#9c9c9c"/>
<path d="M1050 678.500 L1053 671.500 L1072.500 656 C1074 655 1076.500 656.500 1076 658.500 L1057.500 675.500 Z" fill="#c6c6c6"/>
<path d="M1050 678.500 L1068 675.500" stroke="#dadada" stroke-width="1.200"/>
<path d="M1137 656 C1144 658 1154 667 1161.500 677.500 C1162.500 680 1159 681 1157.500 679.500 C1151 672 1144 665 1137 660Z" fill="url(#bx)"/>
<path d="M1164 654.500 C1155 659 1144 669 1138 678.500 C1137.500 681 1141 681 1142.500 679.500 C1147 672 1156 663 1164.500 658.500Z" fill="url(#bx)"/>
</g></svg>
</section>
</main>
<footer class="statusbar">
<div style="left:0px;top:706px;width:1364px;height:1px;background:#9a9a9a;"></div>
<div style="left:0px;top:707px;width:1364px;height:1px;background:#fff;"></div>
<div style="left:0px;top:708px;width:1364px;height:19px;background:#edecea;"></div>
<span class="t" style="left:4.0px;top:710.0px;font-size:12.5px;transform:scaleX(0.9086);">Status</span>
</footer>
</body>
</html>
